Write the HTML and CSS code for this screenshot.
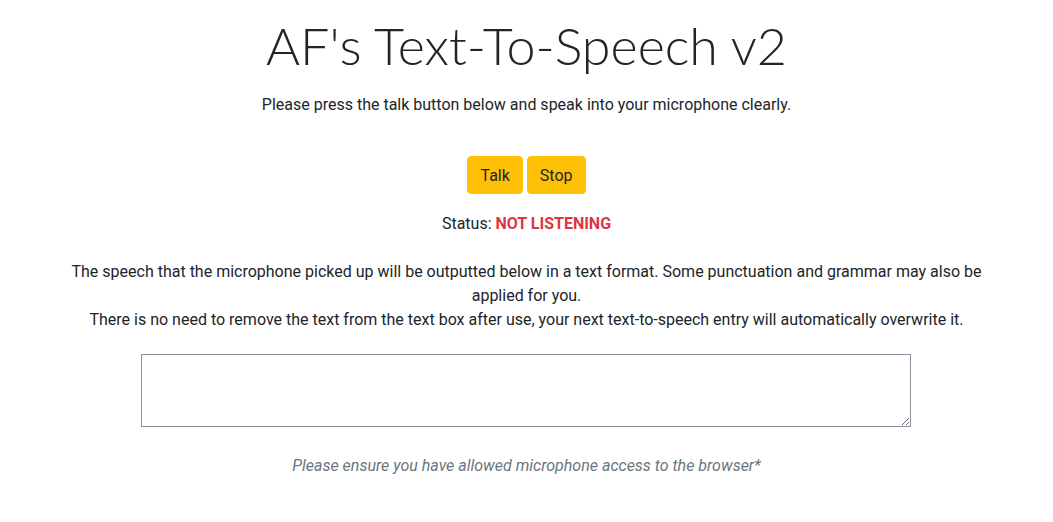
FILE: index.html
```html
<!DOCTYPE html>
<html>
<head>
<meta charset="utf-8">
<title>AF's Text-To-Speech v2</title>
<link rel="stylesheet" href="styles.css">
</head>
<body>
<main class="container">
  <h1 class="title">AF's Text-To-Speech v2</h1>
  <p class="intro">Please press the talk button below and speak into your microphone clearly.</p>
  <div class="controls">
    <button class="btn" type="button">Talk</button>
    <button class="btn" type="button">Stop</button>
  </div>
  <p class="status">Status: <span class="status-value">NOT LISTENING</span></p>
  <p class="info">The speech that the microphone picked up will be outputted below in a text format. Some punctuation and grammar may also be applied for you.<br>There is no need to remove the text from the text box after use, your next text-to-speech entry will automatically overwrite it.</p>
  <div class="output-row">
    <textarea class="output"></textarea>
  </div>
  <p class="note">Please ensure you have allowed microphone access to the browser*</p>
</main>
</body>
</html>
```
FILE: styles.css
```css
html, body {
  margin: 0;
  padding: 0;
  background: #fff;
}
body {
  font-family: "Roboto", "Liberation Sans", sans-serif;
  font-size: 16px;
  line-height: 24px;
  color: #212529;
}
.container {
  width: 930px;
  margin: 0 auto;
  padding: 0 15px;
  display: flex;
  flex-direction: column;
  align-items: center;
  text-align: center;
}
.title {
  font-family: "Lato", "Roboto", sans-serif;
  font-weight: 300;
  font-size: 52px;
  line-height: 67px;
  margin: 12px 0 0 0;
  color: #212529;
}
.intro {
  margin: 14px 0 0 0;
}
.controls {
  margin-top: 39px;
  display: flex;
  gap: 4px;
}
.btn {
  font-family: inherit;
  font-size: 16px;
  line-height: 24px;
  color: #212529;
  background: #ffc107;
  border: 1px solid #ffc107;
  border-radius: 4px;
  padding: 7px 12px 5px;
  cursor: pointer;
}
.status {
  margin: 18px 0 0 0;
}
.status-value {
  color: #dc3545;
  font-weight: 700;
}
.info {
  margin: 24px 0 0 0;
}
.output-row {
  margin: 22px 1px 0 0;
  width: 770px;
  display: flex;
}
.output {
  width: 770px;
  height: 73px;
  box-sizing: border-box;
  border: 1px solid #8f8f9d;
  border-radius: 0;
  margin: 0;
  padding: 2px;
  font-family: inherit;
  font-size: 16px;
  resize: both;
}
.note {
  margin: 27px 0 0 0;
  font-style: italic;
  color: #6c757d;
}
```
